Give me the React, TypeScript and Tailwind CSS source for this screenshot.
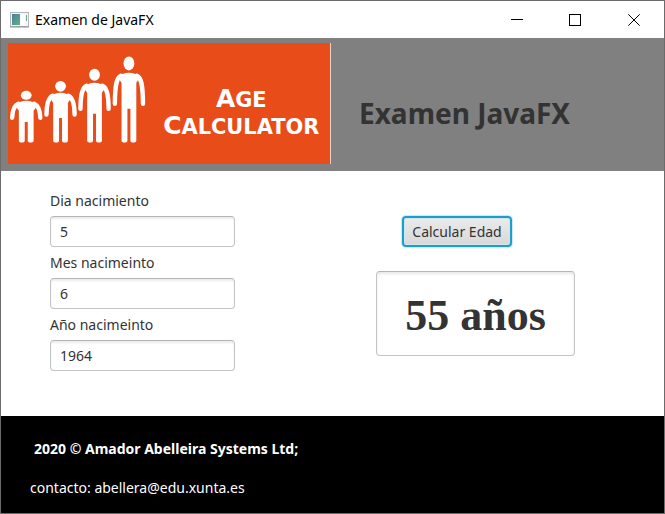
import { useState } from "react";
import type { FormEvent } from "react";

type Figure = { x: number; headY: number; headR: number; top: number; hand: number; crotch: number };

const figures: Figure[] = [
  { x: 18.3, headY: 52.3, headR: 4.5, top: 57.7, hand: 77, crotch: 79 },
  { x: 52.7, headY: 43.3, headR: 5.3, top: 49.7, hand: 73.7, crotch: 75 },
  { x: 86.8, headY: 31.7, headR: 6.1, top: 39.7, hand: 68, crotch: 70.7 },
  { x: 121.3, headY: 20.3, headR: 7, top: 29.7, hand: 63, crotch: 65.7 },
];

function Person({ x, headY, headR, top, hand, crotch }: Figure) {
  const floor = 99.7;
  const body = `M${x - 7.4} ${floor - 2} V${top + 10} L${x - 11} ${top + 5} Q${x - 7} ${top} ${x} ${top} Q${x + 7} ${top} ${x + 11} ${top + 5} L${x + 7.4} ${top + 10} V${floor - 2} a2.9 2 0 0 1 -5.9 0 V${crotch} h-3 V${floor - 2} a2.9 2 0 0 1 -5.9 0 Z`;
  const arms = `M${x - 14.1} ${hand - 2.2} C${x - 14} ${top + 12} ${x - 12.4} ${top + 5} ${x - 8} ${top + 3} M${x + 14.1} ${hand - 2.2} C${x + 14} ${top + 12} ${x + 12.4} ${top + 5} ${x + 8} ${top + 3}`;
  return (
    <g fill="#fff">
      <ellipse cx={x} cy={headY} rx={5.4} ry={headR} />
      <path d={body} />
      <path d={arms} fill="none" stroke="#fff" strokeWidth={4.4} strokeLinecap="round" />
    </g>
  );
}

function Logo() {
  return (
    <svg
      viewBox="0 0 323 121"
      className="h-[121px] w-[323px] shrink-0 border-r border-[#f3d3c5] bg-[#e84c19]"
      role="img"
      aria-label="Age Calculator"
    >
      {figures.map((f) => (
        <Person key={f.x} {...f} />
      ))}
      <g fill="#fff" fontFamily="'DejaVu Sans', sans-serif" fontWeight="700" textAnchor="middle">
        <text x="234" y="64" fontSize="25">
          A<tspan fontSize="21">GE</tspan>
        </text>
        <text x="234" y="91" fontSize="25">
          C<tspan fontSize="21">ALCULATOR</tspan>
        </text>
      </g>
    </svg>
  );
}

function TitleBar() {
  return (
    <div className="flex h-[37px] shrink-0 items-center bg-white pl-[9px]">
      <svg width="19" height="16" viewBox="0 0 19 16" aria-hidden="true">
        <defs>
          <linearGradient id="pane" x1="0" y1="0" x2="1" y2="1">
            <stop offset="0" stopColor="#4a7f9b" />
            <stop offset="1" stopColor="#5fb383" />
          </linearGradient>
        </defs>
        <rect x="0.5" y="0.5" width="18" height="14" fill="#f4f5f7" stroke="#b4b6ba" />
        <path d="M0 15h19" stroke="#8d8f93" />
        <rect x="2" y="2" width="8" height="11" fill="url(#pane)" />
        <rect x="11" y="2" width="4" height="11" fill="#fff" />
        <path d="M16.5 3v6" stroke="#6aa79a" />
      </svg>
      <span className="flex-1 pl-[6px] text-[14px] text-black">Examen de JavaFX</span>
      <button type="button" aria-label="Minimizar" className="flex h-full w-[58px] items-center justify-center">
        <svg width="12" height="12" viewBox="0 0 12 12" stroke="#000" fill="none">
          <path d="M0 5.5h12" />
        </svg>
      </button>
      <button type="button" aria-label="Maximizar" className="flex h-full w-[58px] items-center justify-center">
        <svg width="12" height="12" viewBox="0 0 12 12" stroke="#000" fill="none">
          <rect x="0.5" y="0.5" width="11" height="11" />
        </svg>
      </button>
      <button type="button" aria-label="Cerrar" className="flex h-full w-[60px] items-center justify-center">
        <svg width="12" height="12" viewBox="0 0 12 12" stroke="#000" fill="none">
          <path d="M0.3 0.3l11.4 11.4M11.7 0.3L0.3 11.7" />
        </svg>
      </button>
    </div>
  );
}

type FieldProps = { id: string; label: string; value: string; onChange: (value: string) => void };

function Field({ id, label, value, onChange }: FieldProps) {
  return (
    <div className="flex flex-col gap-[5px]">
      <label htmlFor={id} className="leading-5">
        {label}
      </label>
      <input
        id={id}
        value={value}
        onChange={(e) => onChange(e.target.value)}
        className="h-[31px] w-full rounded-[4px] border border-[#c4c4c4] border-t-[#b5b5b5] bg-white px-[9px] shadow-[inset_0_2px_2px_#ececec] outline-none"
      />
    </div>
  );
}

export default function App() {
  const [day, setDay] = useState("5");
  const [month, setMonth] = useState("6");
  const [year, setYear] = useState("1964");
  const [result, setResult] = useState("55 años");

  const calculate = (e: FormEvent) => {
    e.preventDefault();
    const now = new Date();
    const birthday = new Date(now.getFullYear(), Number(month) - 1, Number(day));
    setResult(`${now.getFullYear() - Number(year) - (now < birthday ? 1 : 0)} años`);
  };

  return (
    <div className="flex min-h-screen flex-col border border-[#6b6b6b] bg-white font-['Noto_Sans',sans-serif] text-[14px] text-[#333]">
      <TitleBar />
      <header className="flex items-center gap-7 bg-[#808080] pt-[5px] pr-4 pb-[7px] pl-[7px]">
        <Logo />
        <h1 className="pt-[18px] text-[28px] leading-9 font-bold">Examen JavaFX</h1>
      </header>
      <form onSubmit={calculate} className="flex flex-1 items-start justify-between gap-6 pt-5 pr-[89px] pb-11 pl-[49px]">
        <div className="flex w-[185px] flex-col gap-[6px]">
          <Field id="day" label="Dia nacimiento" value={day} onChange={setDay} />
          <Field id="month" label="Mes nacimeinto" value={month} onChange={setMonth} />
          <Field id="year" label="Año nacimeinto" value={year} onChange={setYear} />
        </div>
        <div className="flex w-[199px] flex-col items-start gap-6 pt-[25px]">
          <button
            type="submit"
            className="ml-[26px] h-[31px] w-[110px] rounded-[4px] border-2 border-[#1a9fcb] bg-linear-to-b from-[#ebebeb] to-[#d8d8d8] whitespace-nowrap shadow-[0_0_1px_1px_#c5e8f4,inset_0_0_0_1px_#d3e6ec]"
          >
            Calcular Edad
          </button>
          <input
            readOnly
            aria-label="Edad"
            value={result}
            className="h-[85px] w-full rounded-[4px] border border-[#c4c4c4] border-t-[#b5b5b5] bg-white pt-1 text-center font-['Liberation_Serif',serif] text-[44px] font-bold shadow-[inset_0_2px_3px_#e8e8e8] outline-none"
          />
        </div>
      </form>
      <footer className="flex flex-col gap-[19px] bg-black px-[29px] pt-[23px] pb-[15px] leading-5 text-white">
        <p className="pl-1 font-bold">2020 © Amador Abelleira Systems Ltd;</p>
        <p>contacto: abellera@edu.xunta.es</p>
      </footer>
    </div>
  );
}
